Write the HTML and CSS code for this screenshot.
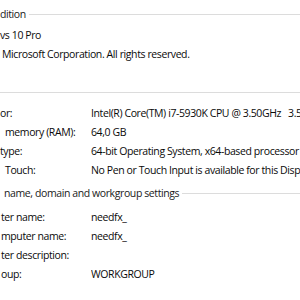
FILE: index.html
```html
<!DOCTYPE html>
<html lang="en">
  <head>
    <meta charset="UTF-8" />
    <title>System</title>
    <link rel="stylesheet" href="styles.css">
  </head>
  <body>
    <div class="group first">
      <div class="heading"><span>dition</span><div class="rule"></div></div>
      <div class="line">vs 10 Pro</div>
      <div class="line pad2">Microsoft Corporation. All rights reserved.</div>
    </div>

    <div class="group system">
      <div class="heading"><div class="rule"></div></div>
      <div class="row"><div class="label">or:</div><div class="value">Intel(R) Core(TM) i7-5930K CPU @ 3.50GHz<span class="extra">3.5</span></div></div>
      <div class="row"><div class="label pad5">memory (RAM):</div><div class="value">64,0 GB</div></div>
      <div class="row"><div class="label">type:</div><div class="value">64-bit Operating System, x64-based processor</div></div>
      <div class="row"><div class="label pad5">Touch:</div><div class="value">No Pen or Touch Input is available for this Displ</div></div>
    </div>

    <div class="group computer">
      <div class="heading"><span class="pad4">name, domain and workgroup settings</span><div class="rule"></div></div>
      <div class="row"><div class="label pad1">ter name:</div><div class="value">needfx_</div></div>
      <div class="row"><div class="label pad1">mputer name:</div><div class="value">needfx_</div></div>
      <div class="row"><div class="label pad1">ter description:</div><div class="value"></div></div>
      <div class="row"><div class="label pad1">oup:</div><div class="value">WORKGROUP</div></div>
    </div>
  </body>
</html>
```
FILE: styles.css
```css
body {
  margin: 0;
  background: #fff;
  color: #0a0a0a;
  font-family: "Open Sans", sans-serif;
  font-size: 10.5px;
  letter-spacing: -0.4px;
  overflow: hidden;
  white-space: nowrap;
}

.heading {
  display: flex;
  align-items: center;
  gap: 3px;
  height: 19px;
  line-height: 19px;
  color: #1a1a1a;
}

.rule {
  flex: 1;
  height: 1px;
  background: #dcdcdc;
}

.group.first {
  padding-top: 5px;
}

.group.first .heading {
  margin-bottom: 2px;
}

.group.system {
  margin-top: 19px;
}

.group.system .heading {
  margin-bottom: 2px;
}

.group.computer {
  margin-top: 4px;
}

.group.computer .heading {
  margin-bottom: 5px;
}

.line {
  height: 19px;
  line-height: 19px;
}

.row {
  display: grid;
  grid-template-columns: 91px 1fr;
  height: 19px;
  line-height: 19px;
}

.value {
  overflow: hidden;
}

.extra {
  margin-left: 7px;
}

.pad1 { padding-left: 1px; }
.pad2 { padding-left: 2px; }
.pad4 { padding-left: 4px; }
.pad5 { padding-left: 5px; }
```
